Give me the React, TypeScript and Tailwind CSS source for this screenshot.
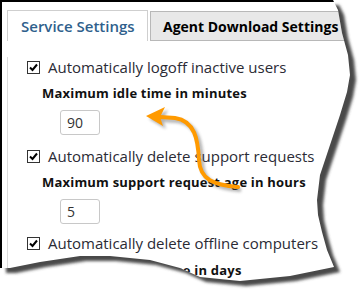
import React from "react";

const font = { fontFamily: '"Open Sans", "Liberation Sans", sans-serif' };

function Check() {
  return (
    <div className="w-[13px] h-[13px] border border-[#333] bg-white flex items-center justify-center shrink-0">
      <svg width="11" height="11" viewBox="0 0 11 11">
        <path d="M2 5.5 L4.5 8 L9 2.5" stroke="#000" strokeWidth="2" fill="none" />
      </svg>
    </div>
  );
}

function CheckRow({ text, mt }: { text: string; mt: string }) {
  return (
    <div className={`flex items-center h-[20px] pl-[19px] ${mt}`}>
      <Check />
      <span className="ml-[8px] text-[15px] leading-[20px] text-[#2b2b35] whitespace-nowrap">{text}</span>
    </div>
  );
}

function Label({ text, mt }: { text: string; mt: string }) {
  return (
    <div className={`pl-[34px] h-[18px] text-[13px] leading-[18px] font-bold tracking-[0.2px] text-[#111] whitespace-nowrap ${mt}`}>
      {text}
    </div>
  );
}

function Input({ value, mt }: { value: string; mt: string }) {
  return (
    <div className={`ml-[52px] ${mt}`}>
      <div className="w-[40px] h-[25px] border border-[#c8c8c8] rounded-[3px] flex items-center pl-[6px] text-[14px] text-[#333]">
        {value}
      </div>
    </div>
  );
}

const paper =
  "M0 0 L333 0 L338 10 L342 33 L348 55 L350 75 L347 92 L340 115 L330 145 L320 175 L317 200 L318 215 L322 232 L327 250 L334 267 L290 276 L240 281 L200 277 L180 268 L150 260 L110 256 L80 256 L40 262 L10 268 L0 268 Z";

export default function App() {
  return (
    <div className="relative w-[359px] h-[292px] bg-white overflow-hidden" style={font}>
      <div className="w-[359px] h-[292px] border-l-2 border-t-2 border-black pt-[8px] pl-[5px]">
        <div className="flex items-end h-[31px]">
          <div className="w-[141px] h-[31px] border border-b-0 border-[#cfcfcf] bg-white flex items-center pl-[13px] text-[15px] font-semibold text-[#2f5f8c] whitespace-nowrap">
            Service Settings
          </div>
          <div className="ml-[2px] flex-1 h-[30px] border border-[#b8b8b8] bg-[#e8e8e8] flex items-center pl-[12px] text-[14px] font-bold text-black whitespace-nowrap">
            Agent Download Settings
          </div>
        </div>
        <div className="border-l border-[#dcdcdc] h-[260px]">
          <CheckRow text="Automatically logoff inactive users" mt="mt-[16px]" />
          <Label text="Maximum idle time in minutes" mt="mt-[7px]" />
          <Input value="90" mt="mt-[8px]" />
          <CheckRow text="Automatically delete support requests" mt="mt-[11px]" />
          <Label text="Maximum support request age in hours" mt="mt-[7px]" />
          <Input value="5" mt="mt-[8px]" />
          <CheckRow text="Automatically delete offline computers" mt="mt-[9px]" />
          <Label text="Maximum offline time in days" mt="mt-[8px]" />
        </div>
      </div>

      {/* arrow annotation */}
      <svg className="absolute left-0 top-0" width="359" height="292" viewBox="0 0 359 292">
        <defs>
          <filter id="ab" x="-20%" y="-20%" width="140%" height="140%">
            <feGaussianBlur stdDeviation="1.5" />
          </filter>
        </defs>
        <g transform="translate(3 3)" filter="url(#ab)" opacity="0.45">
          <path d="M238 187 C214 185 200 180 199 160 C198 140 195 121 175 118 L160 117" stroke="#555" strokeWidth="4" fill="none" />
          <path d="M146 116 L165 107 L160 117 L163 126 Z" fill="#555" />
        </g>
        <path d="M238 187 C214 185 200 180 199 160 C198 140 195 121 175 118 L160 117" stroke="#ff9a00" strokeWidth="4" fill="none" strokeLinecap="round" />
        <path d="M146 116 L165 107 L160 117 L163 126 Z" fill="#ff9a00" />
      </svg>

      {/* torn edge overlay */}
      <svg className="absolute left-0 top-0" width="359" height="292" viewBox="0 0 359 292">
        <defs>
          <clipPath id="outside">
            <path d={`M-10 -10 H370 V300 H-10 Z ${paper}`} clipRule="evenodd" />
          </clipPath>
          <filter id="sb" x="-10%" y="-10%" width="120%" height="120%">
            <feGaussianBlur stdDeviation="1.6" />
          </filter>
        </defs>
        <g clipPath="url(#outside)">
          <rect x="-10" y="-10" width="380" height="310" fill="#fff" />
          <path d={paper} transform="translate(6 5)" fill="#4a4a4a" filter="url(#sb)" />
        </g>
      </svg>
    </div>
  );
}
